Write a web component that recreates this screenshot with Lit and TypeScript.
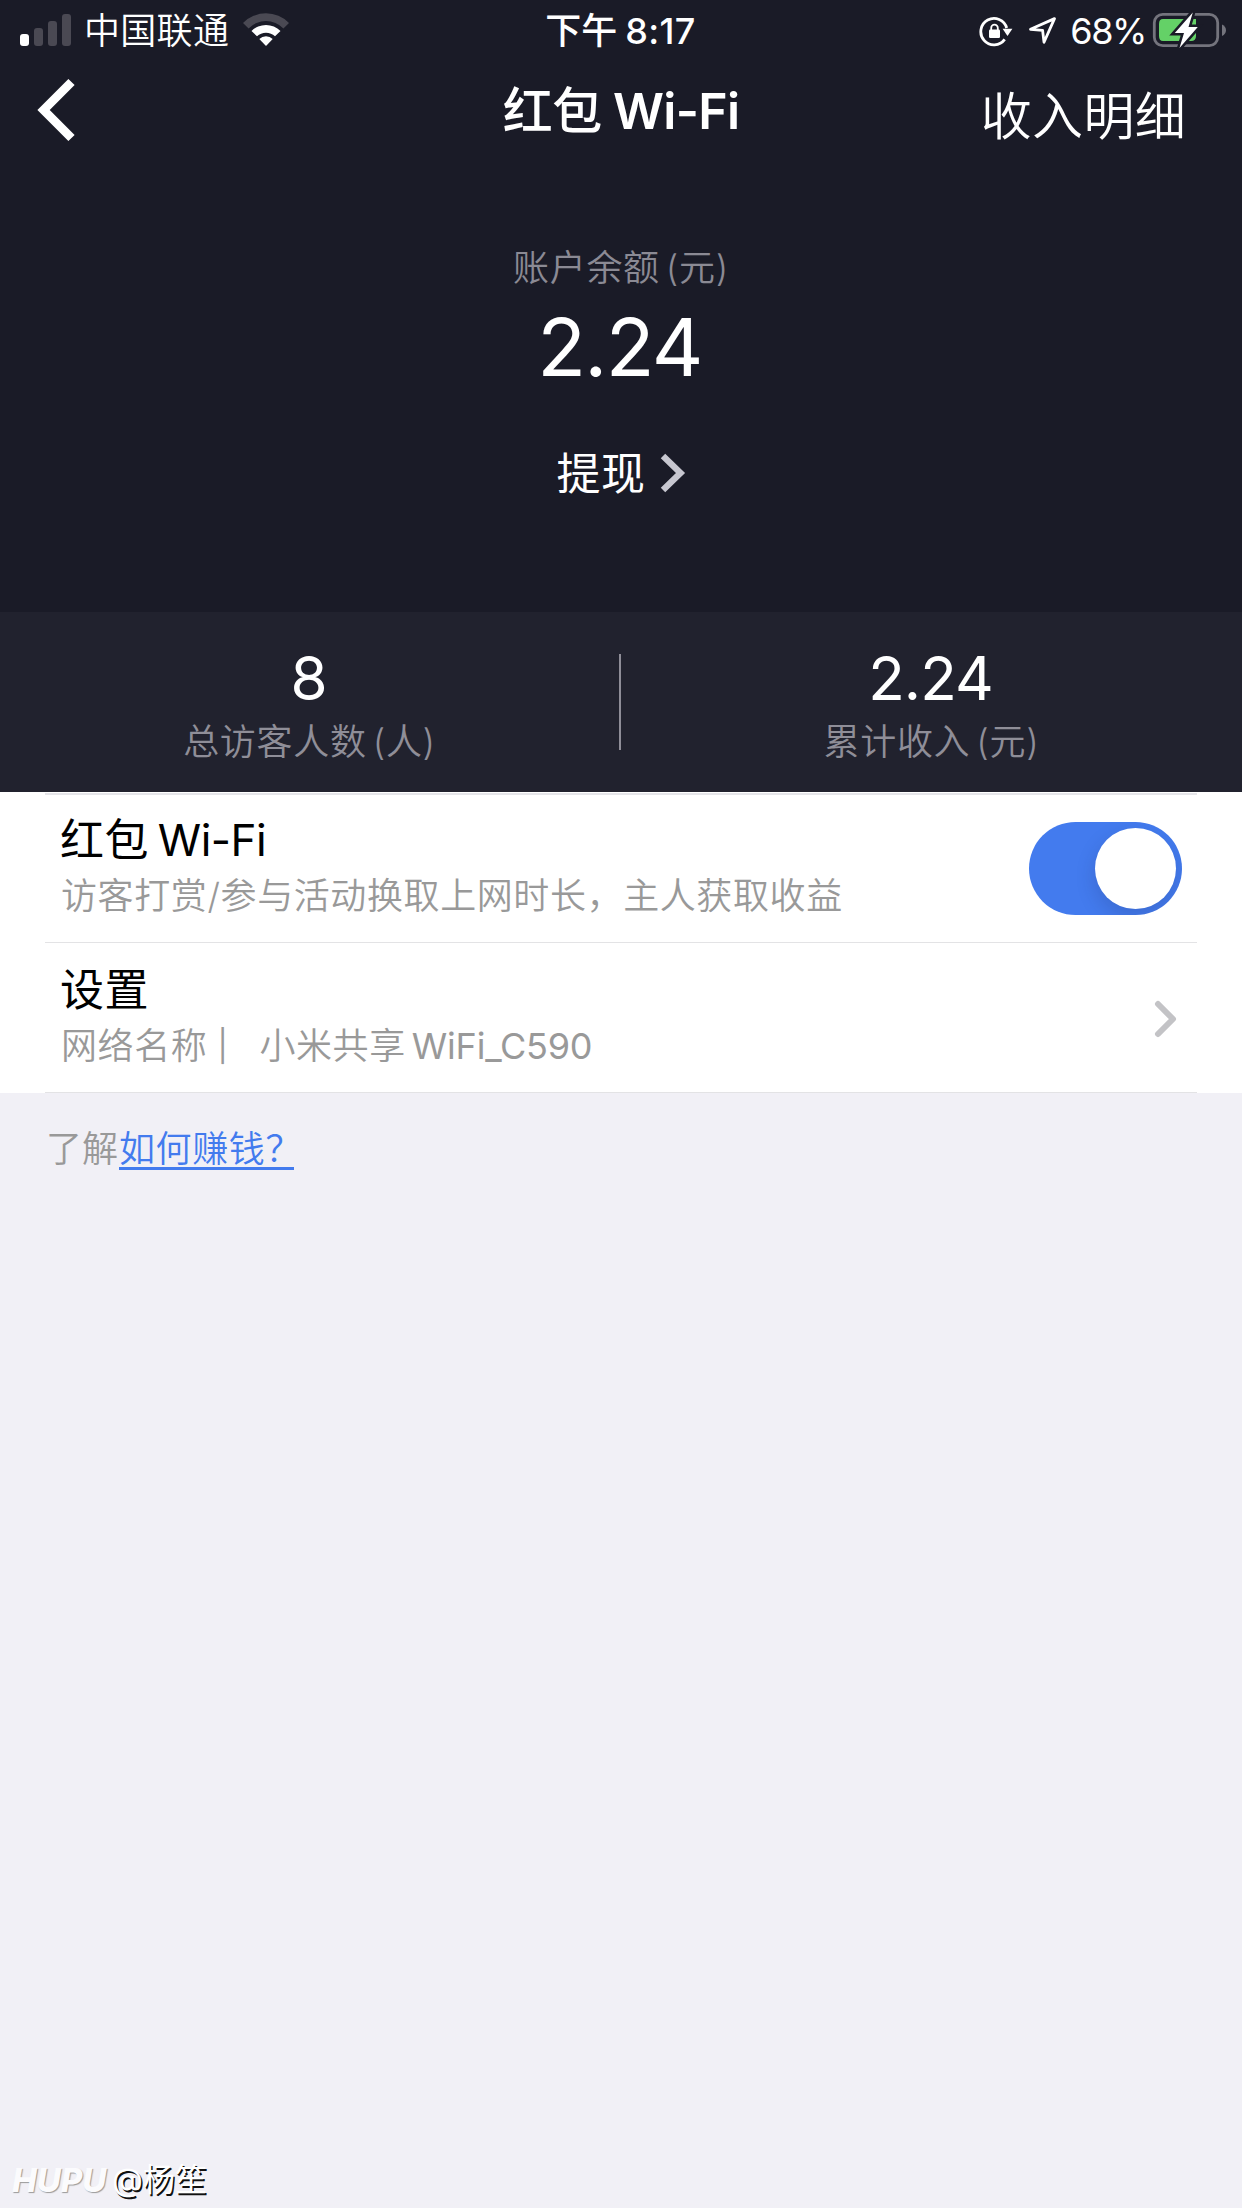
import { LitElement, html, css } from "lit";
import { customElement, property, state } from "lit/decorators.js";

const textBase = css`
  :host {
    font-family: Inter, "Noto Sans CJK SC", sans-serif;
    font-weight: 400;
    box-sizing: border-box;
  }
  * {
    box-sizing: border-box;
  }
  svg {
    display: block;
    flex: none;
  }
  span {
    white-space: pre;
  }
`;

@customElement("status-bar")
class StatusBar extends LitElement {
  static styles = [
    textBase,
    css`
      :host {
        display: grid;
        grid-template-columns: 1fr auto 1fr;
        height: 60px;
        padding: 0 16px 0 20px;
        color: #fff;
        font-size: 36px;
        line-height: 63px;
      }
      .left,
      .right {
        display: flex;
      }
      .carrier {
        font-family: Inter, "Noto Sans CJK SC DemiLight", "Noto Sans CJK SC", sans-serif;
        font-weight: 350;
        margin-left: 13px;
        letter-spacing: 0.3px;
        width: 148px;
      }
      .clock {
        display: flex;
        gap: 8px;
        font-weight: 500;
        padding-right: 5px;
      }
      .time {
        letter-spacing: 0.3px;
      }
      .right {
        justify-content: flex-end;
      }
      .percent {
        margin: 0 6px 0 11px;
        letter-spacing: -1.4px;
      }
      .bars {
        display: flex;
        align-items: flex-end;
        gap: 5px;
        height: 46px;
      }
      .bar {
        width: 9px;
        border-radius: 3px;
        background: #4a4953;
      }
      .b1 { height: 12px; background: #fff; }
      .b2 { height: 18px; }
      .b3 { height: 25px; }
      .b4 { height: 32px; }
    `,
  ];
  render() {
    return html`
      <div class="left">
        <div class="bars">
          <div class="bar b1"></div>
          <div class="bar b2"></div>
          <div class="bar b3"></div>
          <div class="bar b4"></div>
        </div>
        <span class="carrier">中国联通</span>
        <svg width="60" height="60" viewBox="232 0 60 60">
          <path d="M243 23.2 L248.6 28.6 A24.4 24.4 0 0 1 283.4 28.6 L289 23.2 A32.2 32.2 0 0 0 243 23.2Z" fill="#4a4953" transform="translate(0 -.2)"/>
          <path d="M251.5 31 L257 36.3 A13 13 0 0 1 275 36.3 L280.5 31 A20.6 20.6 0 0 0 251.5 31Z" fill="#fff"/>
          <path d="M259.3 39 L266 46 L272.7 39 A9.4 9.4 0 0 0 259.3 39Z" fill="#fff"/>
        </svg>
      </div>
      <div class="clock"><span>下午</span><span class="time">8:17</span></div>
      <div class="right">
        <svg width="80" height="60" viewBox="980 0 80 60" fill="none" stroke="#fff" stroke-width="2.8">
          <path d="M1007.7 28 A13.2 13.2 0 1 0 1005.7 39.4"/>
          <path d="M1003.6 28.8 H1013.4 L1008.5 36Z" fill="#fff" stroke="none"/>
          <rect x="990" y="29.5" width="11" height="8.5" rx="1.2" fill="#fff" stroke="none"/>
          <path d="M992.2 31 V28 A3.3 3.3 0 0 1 998.8 28 V31" stroke-width="1.8"/>
          <path d="M1031.5 29.3 L1055.5 18.6 L1045 42.2 L1043.6 30.4Z" stroke-width="2.8" stroke-linejoin="round"/>
        </svg>
        <span class="percent">68%</span>
        <svg width="74" height="60" viewBox="1152 0 74 60">
          <rect x="1154.3" y="14.3" width="63.4" height="31.4" rx="8.5" fill="none" stroke="#74747d" stroke-width="2.8"/>
          <path d="M1222 24.5 C1227.3 27 1227.3 33.5 1222 36Z" fill="#74747d"/>
          <path d="M1163 19 H1196 V36 Q1196 41 1191 41 H1163 Q1159 41 1159 36 V24 Q1159 19 1163 19Z" fill="#64d167"/>
          <path d="M1192.8 12.5 L1174.8 33 H1184 L1179.5 48 L1197.8 27 H1188.5Z" fill="#fff" stroke="#1a1b27" stroke-width="5" paint-order="stroke"/>
        </svg>
      </div>
    `;
  }
}

@customElement("nav-bar")
class NavBar extends LitElement {
  static styles = [
    textBase,
    css`
      :host {
        display: grid;
        grid-template-columns: 1fr auto 1fr;
        height: 100px;
        padding: 0 56px 0 36px;
        color: #fff;
      }
      .title {
        display: flex;
        gap: 11px;
        font-size: 50px;
        line-height: 102px;
        font-weight: 500;
        padding-left: 20px;
      }
      .cjk {
        letter-spacing: -0.3px;
      }
      .latin {
        font-weight: 600;
        letter-spacing: -0.7px;
      }
      .action {
        font-family: Inter, "Noto Sans CJK SC DemiLight", "Noto Sans CJK SC", sans-serif;
        justify-self: end;
        font-size: 51px;
        line-height: 114px;
        font-weight: 350;
        letter-spacing: 0.3px;
      }
    `,
  ];
  render() {
    return html`
      <svg width="40" height="100" viewBox="36 60 40 100">
        <path d="M71.5 82 L43.6 110 L71.5 138" fill="none" stroke="#fff" stroke-width="8.8"/>
      </svg>
      <div class="title"><span class="cjk">红包</span><span class="latin">Wi-Fi</span></div>
      <span class="action">收入明细</span>
    `;
  }
}

@customElement("stat-cell")
class StatCell extends LitElement {
  @property() value = "";
  @property() label = "";
  @property() unit = "";
  static styles = [
    textBase,
    css`
      :host {
        display: flex;
        flex-direction: column;
        align-items: center;
      }
      .value {
        font-size: 60px;
        line-height: 60px;
        margin: 36px 2px 0 0;
        color: #fff;
        letter-spacing: -0.9px;
      }
      .label {
        font-family: Inter, "Noto Sans CJK SC DemiLight", "Noto Sans CJK SC", sans-serif;
        display: flex;
        gap: 6px;
        font-size: 36px;
        line-height: 68px;
        font-weight: 350;
        letter-spacing: 0.7px;
        color: #8f8e98;
      }
    `,
  ];
  render() {
    return html`
      <span class="value">${this.value}</span>
      <div class="label"><span>${this.label}</span><span>(${this.unit})</span></div>
    `;
  }
}

@customElement("setting-row")
class SettingRow extends LitElement {
  static styles = [
    textBase,
    css`
      :host {
        display: flex;
        justify-content: space-between;
        align-items: center;
        margin: 0 45px;
        padding: 2px 15px 0 16px;
        height: 150px;
        border-bottom: 1px solid #e3e3e5;
      }
      .copy {
        display: flex;
        flex-direction: column;
        padding-bottom: 2px;
      }
    `,
  ];
  render() {
    return html`
      <div class="copy"><slot name="title"></slot><slot name="detail"></slot></div>
      <slot></slot>
    `;
  }
}

@customElement("app-root")
class AppRoot extends LitElement {
  @state() private enabled = true;

  static styles = [
    textBase,
    css`
      :host {
        display: flex;
        flex-direction: column;
        width: 1242px;
        height: 2208px;
        background: #f1f0f6;
        overflow: hidden;
      }
      .caption,
      .detail,
      .help {
        font-family: Inter, "Noto Sans CJK SC DemiLight", "Noto Sans CJK SC", sans-serif;
        font-weight: 350;
      }
      .top {
        background: #1a1b27;
        height: 612px;
      }
      .balance {
        display: flex;
        flex-direction: column;
        align-items: center;
        padding-top: 78px;
      }
      .caption {
        display: flex;
        gap: 6px;
        font-size: 36px;
        line-height: 60px;
        letter-spacing: 0.7px;
        color: #8b8a94;
      }
      .amount {
        font-size: 80px;
        line-height: 98px;
        letter-spacing: -1.6px;
        margin-right: 3px;
        color: #fff;
      }
      .withdraw {
        display: flex;
        gap: 14px;
        font-size: 44px;
        line-height: 62px;
        letter-spacing: 0.4px;
        color: #fff;
        margin: 47px 0 0 2px;
      }
      .stats {
        display: grid;
        grid-template-columns: 619px 2px 621px;
        height: 180px;
        background: #21222e;
      }
      .rule {
        height: 96px;
        margin-top: 42px;
        background: #8f8e98;
      }
      .list {
        background: #fff;
        height: 301px;
        padding-top: 1px;
      }
      .topline {
        height: 2px;
        margin: 0 45px -2px;
        background: #e5e5e9;
      }
      .title {
        display: flex;
        gap: 9px;
        font-size: 44px;
        line-height: 56px;
        letter-spacing: 0.4px;
        color: #000;
        margin-left: -1px;
      }
      .latin {
        letter-spacing: -0.5px;
      }
      .detail {
        font-size: 36px;
        line-height: 56px;
        letter-spacing: 0.6px;
        color: #999;
      }
      .split {
        display: flex;
      }
      .bar {
        width: 12px;
        margin: 0 30px 0 10px;
        font-size: 31px;
        font-weight: 400;
      }
      .ssid {
        margin-left: 6px;
        font-weight: 400;
        letter-spacing: -0.2px;
      }
      .switch {
        display: flex;
        align-items: center;
        justify-content: flex-start;
        width: 153px;
        height: 93px;
        padding: 6px;
        border-radius: 47px;
        background: #c8c8cc;
        overflow: hidden;
      }
      .switch.on {
        justify-content: flex-end;
        background: #437bee;
      }
      .knob {
        width: 81px;
        height: 81px;
        border-radius: 50%;
        background: #fff;
        box-shadow: 0 8px 20px rgba(30, 40, 90, 0.2);
      }
      .help {
        display: flex;
        padding: 27px 0 0 46px;
        font-size: 36px;
        line-height: 59px;
        color: #999;
        flex: 1;
      }
      .link {
        height: 50px;
        width: 175px;
        margin-left: 1px;
        color: #437bee;
        border-bottom: 3px solid #437bee;
        letter-spacing: 0.6px;
      }
      .mark {
        display: flex;
        padding-left: 12px;
        height: 56px;
        line-height: 56px;
        color: #fff;
      }
      .brand {
        width: 100px;
        font-size: 33px;
        font-weight: 800;
        font-style: italic;
        color: #fbfbfd;
        text-shadow: 1px 1px 1px #999;
      }
      .user {
        font-size: 32px;
        text-shadow: 1.5px 1.5px 0.5px #111;
      }
    `,
  ];

  render() {
    return html`
      <div class="top">
        <status-bar></status-bar>
        <nav-bar></nav-bar>
        <div class="balance">
          <div class="caption"><span>账户余额</span><span>(元)</span></div>
          <span class="amount">2.24</span>
          <div class="withdraw">
            <span>提现</span>
            <svg width="28" height="60" viewBox="660 443 28 60">
              <path d="M664 456 L681.5 473 L664 490" fill="none" stroke="#c7c7d0" stroke-width="6.4"/>
            </svg>
          </div>
        </div>
      </div>
      <div class="stats">
        <stat-cell value="8" label="总访客人数" unit="人"></stat-cell>
        <div class="rule"></div>
        <stat-cell value="2.24" label="累计收入" unit="元"></stat-cell>
      </div>
      <div class="list">
        <div class="topline"></div>
        <setting-row>
          <div slot="title" class="title"><span>红包</span><span class="latin">Wi-Fi</span></div>
          <span slot="detail" class="detail">访客打赏/参与活动换取上网时长，主人获取收益</span>
          <div
            class="switch ${this.enabled ? "on" : ""}"
            @click=${() => (this.enabled = !this.enabled)}
          ><div class="knob"></div></div>
        </setting-row>
        <setting-row>
          <div slot="title" class="title"><span>设置</span></div>
          <div slot="detail" class="detail split">
            <span>网络名称</span><span class="bar">|</span><span>小米共享</span><span class="ssid">WiFi_C590</span>
          </div>
          <svg width="28" height="40" viewBox="1154 999 28 40">
            <path d="M1158 1004 L1173 1019 L1158 1034" fill="none" stroke="#c3c3c6" stroke-width="6" stroke-linecap="round" stroke-linejoin="round"/>
          </svg>
        </setting-row>
      </div>
      <div class="help"><span>了解</span><span class="link">如何赚钱？</span></div>
      <div class="mark"><span class="brand">HUPU</span><span class="user">@杨笙</span></div>
    `;
  }
}
